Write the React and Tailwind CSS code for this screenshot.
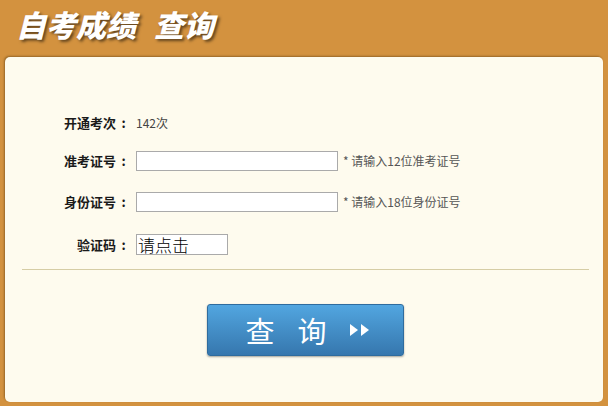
export default function App() {
  const cjk = { fontFamily: '"Noto Sans CJK SC", "Noto Sans", sans-serif' };
  const Label = ({ children }) => (
    <div className="w-[126px] flex justify-end text-[13px] font-bold text-[#1a1a1a]">
      <span>{children}</span>
      <span className="w-[15px] text-center">:</span>
    </div>
  );
  return (
    <div className="w-[608px] h-[406px] bg-[#d3923f] overflow-hidden" style={cjk}>
      <div className="h-[48px] flex items-center pl-[16px]">
        <h1 className="text-white text-[30px] font-black italic leading-none [text-shadow:2px_2px_3px_rgba(0,0,0,0.55)]">
          自考成绩<span className="ml-[18px]">查询</span>
        </h1>
      </div>
      <div className="mt-[9px] mx-[5px] h-[345px] bg-[#fefbee] rounded-[5px] shadow-[-1px_-1px_2px_rgba(80,50,10,0.45)] pt-[56px]">
        <div className="flex items-center h-[20px]">
          <Label>开通考次</Label>
          <div className="ml-[5px] text-[12px] text-[#444]">142次</div>
        </div>
        <div className="flex items-center h-[20px] mt-[18px]">
          <Label>准考证号</Label>
          <input className="ml-[5px] w-[202px] h-[20px] border border-[#aaa] bg-white outline-none" />
          <span className="ml-[5px] text-[12px] text-[#555]">* 请输入12位准考证号</span>
        </div>
        <div className="flex items-center h-[20px] mt-[21px]">
          <Label>身份证号</Label>
          <input className="ml-[5px] w-[202px] h-[20px] border border-[#aaa] bg-white outline-none" />
          <span className="ml-[5px] text-[12px] text-[#555]">* 请输入18位身份证号</span>
        </div>
        <div className="flex items-center h-[21px] mt-[22px]">
          <Label>验证码</Label>
          <div className="ml-[5px] w-[92px] h-[21px] border border-[#aaa] bg-white text-[17px] leading-[19px] text-black pl-[1px] font-light">请点击</div>
        </div>
        <div className="ml-[17px] mr-[14px] mt-[14px] h-px bg-[#d6cda5]"></div>
        <div className="flex justify-center mt-[34px] pl-[2px]">
          <button className="w-[197px] h-[52px] rounded-[3px] border border-[#2f6c9e] bg-gradient-to-b from-[#52a6e0] to-[#3677ae] shadow-[0_1px_2px_rgba(0,0,0,0.35)] flex items-center justify-center text-white text-[29px] leading-none">
            <span className="ml-[6px]">查</span>
            <span className="ml-[23px]">询</span>
            <svg className="ml-[22px]" width="22" height="14" viewBox="0 0 22 14">
              <path d="M1 1 L9 7 L1 13 Z" fill="white" />
              <path d="M12 1 L20 7 L12 13 Z" fill="white" />
            </svg>
          </button>
        </div>
      </div>
    </div>
  );
}
